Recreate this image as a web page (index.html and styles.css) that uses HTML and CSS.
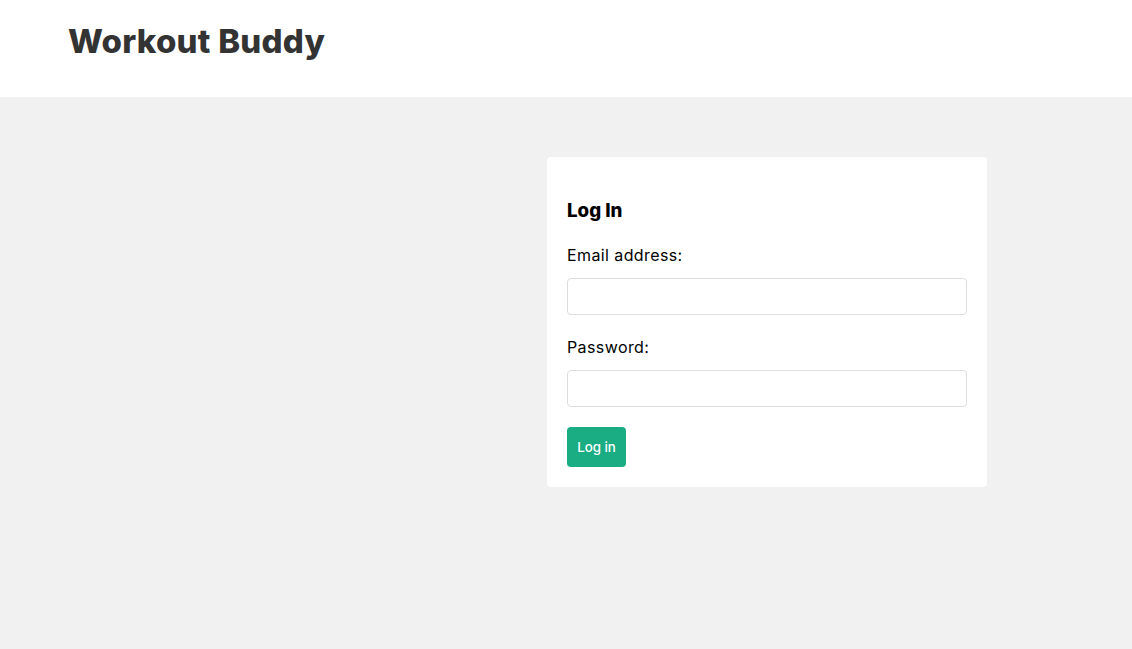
FILE: index.html
```html
<!DOCTYPE html>
<html lang="en">
<head>
<meta charset="utf-8">
<title>Workout Buddy</title>
<link rel="stylesheet" href="styles.css">
</head>
<body>
<header class="site-header">
  <div class="header-inner">
    <a class="brand" href="#"><h1 class="brand-title">Workout Buddy</h1></a>
  </div>
</header>
<main class="pages">
  <div class="spacer"></div>
  <form class="login">
    <h3 class="login-title">Log In</h3>
    <label class="field-label">Email address:</label>
    <input class="field-input" type="email">
    <label class="field-label">Password:</label>
    <input class="field-input" type="password">
    <button class="login-btn" type="button">Log in</button>
  </form>
</main>
</body>
</html>
```
FILE: styles.css
```css
html, body {
  margin: 0;
  padding: 0;
}
body {
  background: #f1f1f1;
  font-family: "Inter", "Open Sans", sans-serif;
  color: #000;
  height: 649px;
}
.site-header {
  background: #fff;
  height: 97px;
}
.header-inner {
  padding: 0 20px 0 68px;
  height: 97px;
  display: flex;
  align-items: flex-start;
}
.brand {
  color: #333;
  text-decoration: none;
}
.brand-title {
  margin: 0;
  padding-top: 19px;
  font-size: 33px;
  line-height: 44px;
  font-weight: 800;
  letter-spacing: 0.25px;
}
.pages {
  display: grid;
  grid-template-columns: 1fr 440px;
  padding: 60px 145px 0 20px;
}
.login {
  background: #fff;
  border-radius: 4px;
  padding: 20px;
}
.login-title {
  margin: 20px 0 18px;
  font-size: 18.7px;
  line-height: 28px;
  font-weight: 800;
}
.field-label {
  display: block;
  font-size: 16px;
  line-height: 24px;
  letter-spacing: 0.4px;
}
.field-input {
  display: block;
  box-sizing: border-box;
  width: 100%;
  height: 37px;
  margin: 11px 0 20px;
  padding: 10px;
  border: 1px solid #ddd;
  border-radius: 4px;
  font-family: inherit;
}
.login-btn {
  display: block;
  background: #1aac83;
  border: 0;
  color: #fff;
  padding: 0 10px;
  height: 40px;
  width: 59px;
  font-family: inherit;
  font-size: 13.3px;
  font-weight: 500;
  border-radius: 4px;
}
```
